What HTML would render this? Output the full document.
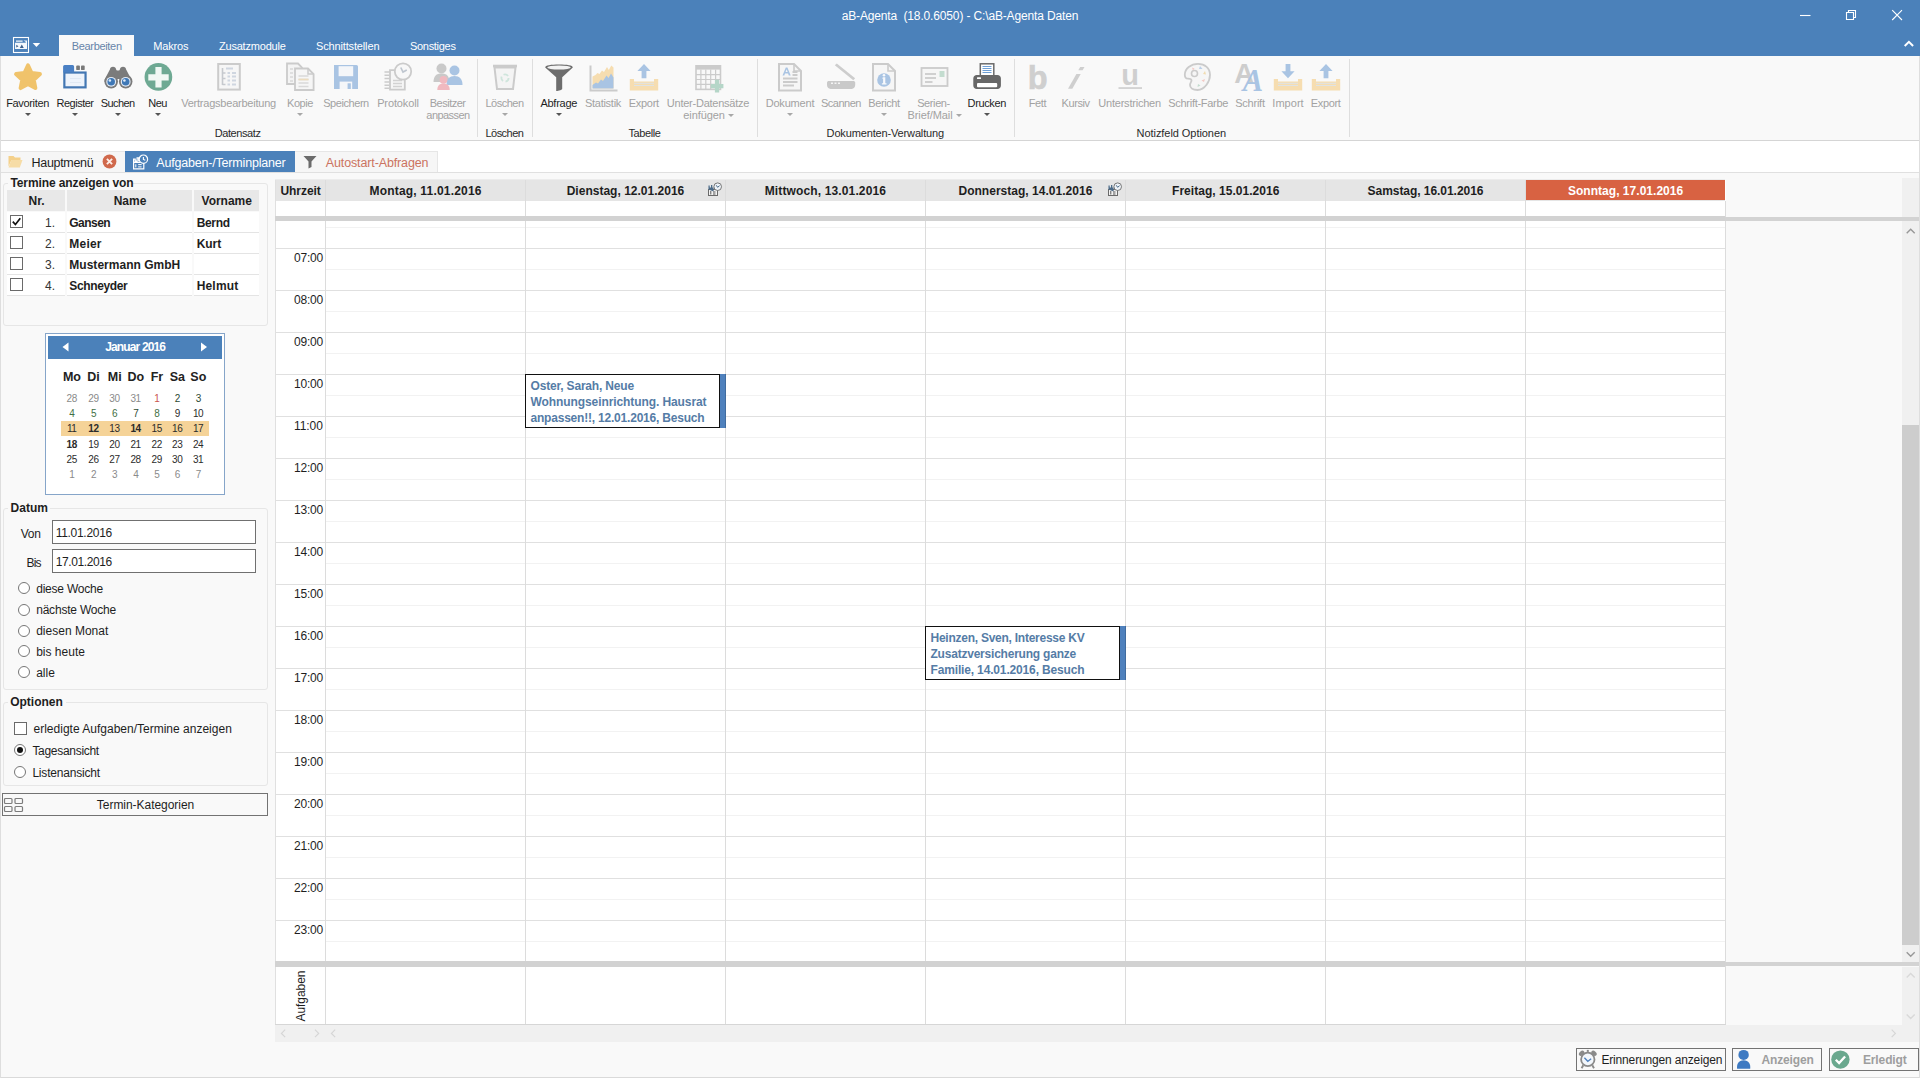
<!DOCTYPE html>
<html><head><meta charset="utf-8"><title>aB-Agenta</title>
<style>
*{box-sizing:border-box;margin:0;padding:0}
html,body{width:1920px;height:1078px;overflow:hidden;background:#f9f9f9;font-family:"Liberation Sans",sans-serif;font-size:12px;color:#1e1e1e}
div,span{position:absolute;white-space:nowrap}
.t{line-height:14px;height:14px}
.c{text-align:center}
.r{text-align:right}
.b{font-weight:bold}
.dis{color:#ababab}
svg{position:absolute;overflow:visible}
</style></head><body>
<div style="left:0;top:0;width:1920px;height:56px;background:#4b81ba"></div>
<div class="t" style="left:841.70px;top:8.80px;font-size:12px;letter-spacing:-0.145px;color:#fff;">aB-Agenta  (18.0.6050) - C:\aB-Agenta Daten</div>
<svg style="left:0;top:0" width="1920" height="56" viewBox="0 0 1920 56"><g stroke="#fff" stroke-width="1.1" fill="none"><path d="M1800 15.5h10.500"/><path d="M1846.500 12.500h7v7h-7z"/><path d="M1848.500 12.500v-2h7v7h-2"/><path d="M1892.200 10.200l9.800 9.800M1902 10.200l-9.800 9.800"/></g><path d="M1904.700 46l4.200-4.200 4.200 4.200" stroke="#fff" stroke-width="2" fill="none"/></svg>
<div style="left:0;top:56px;width:1920px;height:84px;background:#f9f9f9"></div>
<div style="left:0;top:140px;width:1920px;height:1px;background:#d5d5d5"></div>
<div style="left:0;top:141px;width:1920px;height:31px;background:#fff"></div>
<div style="left:59px;top:35px;width:75px;height:21px;background:#f9f9f9"></div>
<div class="t" style="left:71.70px;top:39.00px;font-size:11px;letter-spacing:-0.321px;color:#6785a9;">Bearbeiten</div>
<div class="t" style="left:153.30px;top:39.00px;font-size:11px;letter-spacing:-0.177px;color:#fff;">Makros</div>
<div class="t" style="left:218.95px;top:39.00px;font-size:11px;letter-spacing:-0.199px;color:#fff;">Zusatzmodule</div>
<div class="t" style="left:316.05px;top:39.00px;font-size:11px;letter-spacing:-0.152px;color:#fff;">Schnittstellen</div>
<div class="t" style="left:409.95px;top:39.00px;font-size:11px;letter-spacing:-0.290px;color:#fff;">Sonstiges</div>
<svg style="left:0;top:30px" width="60" height="26" viewBox="0 30 60 26"><rect x="13.500" y="37.500" width="15" height="15" fill="none" stroke="#fff" stroke-width="1.100"/><path d="M15 42.700h10.700v6.300H15zM16 40.500h6.600v1.300H16zM23.500 40.500h3.500v8.500h-1.300v-7.200z" fill="#f4f8fc"/><path d="M16.300 44.800l2.200 1.400-2.200 1.400zM19.800 48l2-3.400 2 3.400z" fill="#3c5f8c"/><path d="M32.700 43h7.500l-3.750 4.100z" fill="#fff"/></svg>
<svg style="left:11.6px;top:61px" width="32" height="32" viewBox="0 0 32 32"><path d="M16.00 4.30 L19.59 11.96 L27.98 13.01 L21.80 18.79 L23.41 27.09 L16.00 23.00 L8.59 27.09 L10.20 18.79 L4.02 13.01 L12.41 11.96Z" fill="#f0c36b" stroke="#f0c36b" stroke-width="3.900" stroke-linejoin="round"/></svg>
<div class="t" style="left:6.15px;top:96.00px;font-size:11px;letter-spacing:-0.328px;color:#1e1e1e;">Favoriten</div>
<svg style="left:24.6px;top:113.0px" width="6" height="3" viewBox="0 0 6 3"><path d="M0 0h6L3 3z" fill="#555"/></svg>
<svg style="left:59.0px;top:61px" width="32" height="32" viewBox="0 0 32 32"><rect x="5.350" y="11.550" width="21.200" height="14.800" fill="#edf3fb" stroke="#4377b3" stroke-width="2.200"/><path d="M4.100 11.500V5.600a1.500 1.500 0 0 1 1.500-1.500h8a1.500 1.500 0 0 1 1.500 1.500V11.500z" fill="#4a80c4"/><rect x="17.200" y="4.500" width="3.700" height="4.600" rx="0.900" fill="#7a7a7a"/><rect x="22" y="4.500" width="3.700" height="4.600" rx="0.900" fill="#7a7a7a"/><path d="M11 17.500h11M11 21.500h11" stroke="#dfe8f3" stroke-width="1.200"/></svg>
<div class="t" style="left:56.45px;top:96.00px;font-size:11px;letter-spacing:-0.483px;color:#1e1e1e;">Register</div>
<svg style="left:72.0px;top:113.0px" width="6" height="3" viewBox="0 0 6 3"><path d="M0 0h6L3 3z" fill="#555"/></svg>
<svg style="left:101.6px;top:61px" width="32" height="32" viewBox="0 0 32 32"><path d="M8 8.200c0-1.500 1.200-2.400 3-2.400s3 0.900 3 2.400l0.800 1.300h2.400l0.800-1.300c0-1.500 1.200-2.400 3-2.400s3 0.900 3 2.400l5.500 10.500v2h-10.500v-4.700h-5v4.700H2.500v-2z" fill="#7b7b7b"/><circle cx="9.200" cy="20.600" r="6.800" fill="#7b7b7b"/><circle cx="23.700" cy="20.600" r="6.800" fill="#7b7b7b"/><rect x="13" y="12" width="7" height="6" fill="#7b7b7b"/><circle cx="9.200" cy="20.800" r="4.900" fill="#e3ecf7"/><circle cx="23.700" cy="20.800" r="4.900" fill="#e3ecf7"/><circle cx="9.200" cy="20.800" r="3.800" fill="#3f78b6"/><circle cx="23.700" cy="20.800" r="3.800" fill="#3f78b6"/><circle cx="7.900" cy="19.500" r="1.300" fill="#dfeaf6"/><circle cx="22.400" cy="19.500" r="1.300" fill="#dfeaf6"/></svg>
<div class="t" style="left:100.80px;top:96.00px;font-size:11px;letter-spacing:-0.618px;color:#1e1e1e;">Suchen</div>
<svg style="left:114.6px;top:113.0px" width="6" height="3" viewBox="0 0 6 3"><path d="M0 0h6L3 3z" fill="#555"/></svg>
<svg style="left:141.6px;top:61px" width="32" height="32" viewBox="0 0 32 32"><circle cx="16.400" cy="15.950" r="13.850" fill="#6ea993"/><path d="M13.400 6.100h6.200v7.100h7.100v6.200h-7.100v7.100h-6.200v-7.100H6.300v-6.200h7.100z" fill="#f1f8f4"/></svg>
<div class="t" style="left:148.32px;top:96.00px;font-size:11px;letter-spacing:-0.538px;color:#1e1e1e;">Neu</div>
<svg style="left:154.6px;top:113.0px" width="6" height="3" viewBox="0 0 6 3"><path d="M0 0h6L3 3z" fill="#555"/></svg>
<svg style="left:212.6px;top:61px" width="32" height="32" viewBox="0 0 32 32"><rect x="5.200" y="3" width="21.600" height="25.600" fill="#f6f6f6" stroke="#cbcbcb" stroke-width="2"/><path d="M9.500 7v17M9.500 12h3M9.500 17.500h3M9.500 23.500h3" stroke="#c6c9ce" stroke-width="1.600" fill="none"/><path d="M13 7.500h7M14.500 12h2.500M19 12h4M14.500 15.500h2.500M19 15.500h4M14.500 19.500h2.500M19 19.500h4M14.500 23.500h2.500M19 23.500h4" stroke="#cfd6e0" stroke-width="1.800"/></svg>
<div class="t" style="left:181.20px;top:96.00px;font-size:11px;letter-spacing:-0.225px;color:#a2a2a2;">Vertragsbearbeitung</div>
<svg style="left:284.0px;top:61px" width="32" height="32" viewBox="0 0 32 32"><path d="M3 2.5h11l4 4V23H3z" fill="#f4f4f4" stroke="#cbcbcb" stroke-width="1.8"/><path d="M6 8h3M6 12h3M6 16h3M6 20h3" stroke="#d8d8d8" stroke-width="1.6"/><path d="M11 7.5h13l5.6 5.6V29H11z" fill="#f6f6f6" stroke="#cbcbcb" stroke-width="1.8"/><path d="M24 7.5v5.6h5.6" fill="none" stroke="#cbcbcb" stroke-width="1.5"/><path d="M14.5 15h10M14.5 18.5h10M14.5 22h10M14.5 25.5h10" stroke="#d9d9d9" stroke-width="1.7"/><path d="M14.5 18.5h10" stroke="#ecdcbf" stroke-width="1.7"/></svg>
<div class="t" style="left:287.10px;top:96.00px;font-size:11px;letter-spacing:-0.467px;color:#a2a2a2;">Kopie</div>
<svg style="left:297.0px;top:113.0px" width="6" height="3" viewBox="0 0 6 3"><path d="M0 0h6L3 3z" fill="#a8a8a8"/></svg>
<svg style="left:330.0px;top:61px" width="32" height="32" viewBox="0 0 32 32"><path d="M4 4h22.5a1.5 1.5 0 0 1 1.5 1.5V28H4z" fill="#a9c4e3"/><rect x="8.6" y="5.2" width="14.6" height="10" fill="#f4f6f9"/><rect x="9.6" y="20.6" width="12.6" height="7.4" fill="#f4f6f9"/><rect x="17.6" y="22.3" width="3.2" height="5.7" fill="#a9c4e3"/></svg>
<div class="t" style="left:323.20px;top:96.00px;font-size:11px;letter-spacing:-0.437px;color:#a2a2a2;">Speichern</div>
<svg style="left:382.0px;top:61px" width="32" height="32" viewBox="0 0 32 32"><path d="M8 9.200h14.800v19.500H8z" fill="#f6f6f6" stroke="#cbcbcb" stroke-width="1.800"/><path d="M2.500 11h5M2.500 14.300h5M2.500 17.600h5M2.500 20.900h5M2.500 24.200h5M2.500 27.300h5" stroke="#cbcbcb" stroke-width="1.500"/><path d="M11 19.500h9M11 22.500h9M11 25.500h9" stroke="#d2d2d2" stroke-width="1.700"/><circle cx="21" cy="10.500" r="8.200" fill="#f8f8f8" stroke="#cbcbcb" stroke-width="1.800"/><path d="M18.800 6.500l2.200 4.500 3.800-2" fill="none" stroke="#bfc6cf" stroke-width="1.700"/></svg>
<div class="t" style="left:377.15px;top:96.00px;font-size:11px;letter-spacing:-0.122px;color:#a2a2a2;">Protokoll</div>
<svg style="left:488.5px;top:61px" width="32" height="32" viewBox="0 0 32 32"><path d="M5.500 6.500h21l-2.500 21.500h-16z" fill="#f4f4f4" stroke="#cbcbcb" stroke-width="2"/><path d="M4 5h24" stroke="#cbcbcb" stroke-width="2.6"/><circle cx="16" cy="17" r="3.600" fill="none" stroke="#cfe5dc" stroke-width="1.800" stroke-dasharray="5 2.500"/></svg>
<div class="t" style="left:485.50px;top:96.00px;font-size:11px;letter-spacing:-0.513px;color:#a2a2a2;">Löschen</div>
<svg style="left:501.5px;top:113.0px" width="6" height="3" viewBox="0 0 6 3"><path d="M0 0h6L3 3z" fill="#a8a8a8"/></svg>
<svg style="left:542.8px;top:61px" width="32" height="32" viewBox="0 0 32 32"><g transform="translate(0,0.7)"><path d="M2.200 5.700C2.200 3.500 8 2.700 16 2.700s13.800 0.800 13.800 3L19.200 15.500v11.500c0 1.200-3.500 2.200-6 2.200V15.500z" fill="#6d6d6d"/><ellipse cx="16" cy="5.800" rx="11.800" ry="2.100" fill="#f2f2f2"/></g></svg>
<div class="t" style="left:540.40px;top:96.00px;font-size:11px;letter-spacing:-0.247px;color:#1e1e1e;">Abfrage</div>
<svg style="left:555.8px;top:113.0px" width="6" height="3" viewBox="0 0 6 3"><path d="M0 0h6L3 3z" fill="#555"/></svg>
<svg style="left:587.0px;top:61px" width="32" height="32" viewBox="0 0 32 32"><path d="M5.500 15.500l3 -1.500 2 -2 2 1 2.500 -3.500 2 1.500 3 -5 1.800 3 2.500 -4.500 2.200 2V27.500H5.500z" fill="#f6ddb0"/><path d="M5.500 24l3.500 -2.500 2 1 3 -4 2 1.500 3.500 -5.500 2 2.500 2.500 -4.500 2.500 4V27.500H5.500z" fill="#a9c4e3"/><path d="M3.500 4.500v25h27" fill="none" stroke="#cbcbcb" stroke-width="2"/></svg>
<div class="t" style="left:584.95px;top:96.00px;font-size:11px;letter-spacing:-0.268px;color:#a2a2a2;">Statistik</div>
<svg style="left:627.8px;top:61px" width="32" height="32" viewBox="0 0 32 32"><path d="M16 3l6.600 7h-4.200v7.300h-4.800V10H9.400z" fill="#a9c4e3"/><path d="M1.800 18h4.200v2.500h20V18h4.200V29.500H1.800z" fill="#f6ddb0"/><path d="M6 22.300h20M6 24.500h20" stroke="#dde3ea" stroke-width="0.900"/></svg>
<div class="t" style="left:628.80px;top:96.00px;font-size:11px;letter-spacing:-0.299px;color:#a2a2a2;">Export</div>
<svg style="left:774.0px;top:61px" width="32" height="32" viewBox="0 0 32 32"><path d="M5 3h15l7 7v19.500H5z" fill="#f6f6f6" stroke="#cbcbcb" stroke-width="2"/><path d="M20 3v7h7" fill="none" stroke="#cbcbcb" stroke-width="1.600"/><path d="M8.500 14.500l3.300-8h1.600l3.300 8h-1.900l-0.700-1.900h-3.100l-0.700 1.900zM11.600 11.100h2.100l-1.050-2.900z" fill="#a9c4e3"/><path d="M18.500 11h5M18.500 14h5M9 17.500h14.500M9 21h14.500M9 24.500h11" stroke="#cbcbcb" stroke-width="1.900"/></svg>
<div class="t" style="left:765.65px;top:96.00px;font-size:11px;letter-spacing:-0.179px;color:#a2a2a2;">Dokument</div>
<svg style="left:787.0px;top:113.0px" width="6" height="3" viewBox="0 0 6 3"><path d="M0 0h6L3 3z" fill="#a8a8a8"/></svg>
<svg style="left:825.0px;top:61px" width="32" height="32" viewBox="0 0 32 32"><path d="M9.800 4.300l2-1.700 18.300 14.600-1.800 2z" fill="#cdcdcd"/><path d="M2 21.500c0-0.800 0.800-1.500 2-1.500h24.200c1.200 0 2 0.700 2 1.500v2.500c0 2.200-1.500 3.900-3.500 3.900h-21.200c-2 0-3.500-1.700-3.500-3.900z" fill="#c9c9c9"/><path d="M6 22.300h2M9.500 22.300h2M13 22.300h2" stroke="#f4f4f4" stroke-width="1.500"/></svg>
<div class="t" style="left:821.02px;top:96.00px;font-size:11px;letter-spacing:-0.496px;color:#a2a2a2;">Scannen</div>
<svg style="left:868.0px;top:61px" width="32" height="32" viewBox="0 0 32 32"><path d="M5 3h15l7 7v19.500H5z" fill="#f6f6f6" stroke="#cbcbcb" stroke-width="2"/><path d="M20 3v7h7" fill="none" stroke="#cbcbcb" stroke-width="1.600"/><circle cx="16" cy="19" r="6.800" fill="#a9c4e3"/><path d="M15 16.200h2.300v6h1.200v1.400h-4.600v-1.400h1.200v-4.600h-1.200z" fill="#f7f9fc"/><circle cx="16" cy="14.200" r="1.300" fill="#f7f9fc"/></svg>
<div class="t" style="left:868.25px;top:96.00px;font-size:11px;letter-spacing:-0.391px;color:#a2a2a2;">Bericht</div>
<svg style="left:881.0px;top:113.0px" width="6" height="3" viewBox="0 0 6 3"><path d="M0 0h6L3 3z" fill="#a8a8a8"/></svg>
<svg style="left:970.8px;top:61px" width="32" height="32" viewBox="0 0 32 32"><rect x="9.300" y="2.800" width="13.500" height="12" fill="#fff" stroke="#6a6a6a" stroke-width="1.500"/><path d="M11.500 5.500h9M11.500 7.500h9M11.500 9.500h9M11.500 11.500h9" stroke="#6fa0d6" stroke-width="1"/><path d="M2.300 17.500c0-2 1.500-3.500 3.500-3.500h20.600c2 0 3.500 1.500 3.500 3.500v7c0 2-1.500 3.500-3.500 3.500h-20.600c-2 0-3.500-1.500-3.500-3.500z" fill="#676767"/><rect x="6" y="22" width="20.200" height="4.200" rx="1" fill="#fff"/><rect x="6" y="16.200" width="4" height="1.800" rx="0.500" fill="#fff"/></svg>
<div class="t" style="left:967.55px;top:96.00px;font-size:11px;letter-spacing:-0.351px;color:#1e1e1e;">Drucken</div>
<svg style="left:983.8px;top:113.0px" width="6" height="3" viewBox="0 0 6 3"><path d="M0 0h6L3 3z" fill="#555"/></svg>
<svg style="left:1181.4px;top:61px" width="32" height="32" viewBox="0 0 32 32"><path d="M17 2.800c7 0 12 4.500 12 11s-5 15.200-12.500 15.200c-5 0-7.500-2.500-7.500-5 0-2 1.500-3 1.500-4.500s-1.500-1.800-3.500-1.800c-2.500 0-3.200-2-3.200-4 0-6 6-10.900 13.200-10.900z" fill="#f6f6f6" stroke="#cbcbcb" stroke-width="1.800"/><circle cx="13.500" cy="12.500" r="3" fill="none" stroke="#cbcbcb" stroke-width="1.600"/><path d="M11 6.500l2.500 1-1.500 2z" fill="#f3c9c4"/><path d="M19 5l2.500 3h-3.500z" fill="#bcd0e8"/><path d="M24 10l1 3.500-3-0.500z" fill="#f1dcb0"/><path d="M24 18l-1 3-2.500-1.500z" fill="#f3c9c4"/><path d="M17 23l2.500 1.500-3 1.500z" fill="#c3dccf"/></svg>
<div class="t" style="left:1168.25px;top:96.00px;font-size:11px;letter-spacing:-0.283px;color:#a2a2a2;">Schrift-Farbe</div>
<svg style="left:1272.0px;top:61px" width="32" height="32" viewBox="0 0 32 32"><path d="M16 17.300l6.600 -7h-4.200V3h-4.800v7.300H9.400z" fill="#a9c4e3"/><path d="M1.800 18h4.200v2.500h20V18h4.200V29.500H1.800z" fill="#f6ddb0"/><path d="M6 22.300h20M6 24.500h20" stroke="#dde3ea" stroke-width="0.900"/></svg>
<div class="t" style="left:1272.35px;top:96.00px;font-size:11px;letter-spacing:0.021px;color:#a2a2a2;">Import</div>
<svg style="left:1309.7px;top:61px" width="32" height="32" viewBox="0 0 32 32"><path d="M16 3l6.600 7h-4.200v7.300h-4.800V10H9.400z" fill="#a9c4e3"/><path d="M1.800 18h4.200v2.500h20V18h4.200V29.500H1.800z" fill="#f6ddb0"/><path d="M6 22.300h20M6 24.500h20" stroke="#dde3ea" stroke-width="0.900"/></svg>
<div class="t" style="left:1310.83px;top:96.00px;font-size:11px;letter-spacing:-0.340px;color:#a2a2a2;">Export</div>
<svg style="left:432.0px;top:61px" width="32" height="32" viewBox="0 0 32 32"><circle cx="9.5" cy="7.5" r="5" fill="#c9c9c9"/><path d="M1.5 21c0-6 3-8.5 8-8.5s8 2.500 8 8.500z" fill="#c9c9c9"/><circle cx="22.5" cy="9.5" r="5" fill="#a9c4e3"/><path d="M14.5 24c0-6 3-9 8-9s8 3 8 9z" fill="#a9c4e3"/><circle cx="11.5" cy="18.8" r="3.9" fill="#f0b9c0"/><path d="M5.3 29c0-4.500 2.500-6.500 6.200-6.500s6.200 2 6.200 6.500z" fill="#f0b9c0"/></svg>
<div class="t" style="left:429.80px;top:96.00px;font-size:11px;letter-spacing:-0.517px;color:#a2a2a2;">Besitzer</div>
<div class="t" style="left:426.35px;top:108.00px;font-size:11px;letter-spacing:-0.551px;color:#a2a2a2;">anpassen</div>
<svg style="left:693.0px;top:61px" width="32" height="32" viewBox="0 0 32 32"><rect x="3" y="4.800" width="24.500" height="23.600" fill="#f8f8f8" stroke="#cbcbcb" stroke-width="1.600"/><rect x="3" y="4.200" width="24.500" height="4.400" fill="#cbcbcb"/><path d="M7.900 8.600v19.800M12.800 8.600v19.800M17.700 8.600v19.800M22.600 8.600v19.800M3 13.550h24.500M3 18.500h24.500M3 23.450h24.500" stroke="#cbcbcb" stroke-width="1.200"/><path d="M21.900 18.800h4.300v4.200h4.200v4.300h-4.200v4.200h-4.300v-4.200h-4.200v-4.300h4.200z" fill="#b5d6c8"/></svg>
<div class="t" style="left:666.85px;top:96.00px;font-size:11px;letter-spacing:-0.244px;color:#a2a2a2;">Unter-Datensätze</div>
<div class="t" style="left:683.35px;top:108.00px;font-size:11px;letter-spacing:-0.113px;color:#a2a2a2;">einfügen</div>
<svg style="left:727.6px;top:113.5px" width="6" height="3" viewBox="0 0 6 3"><path d="M0 0h6L3 3z" fill="#a8a8a8"/></svg>
<svg style="left:916.8px;top:61px" width="32" height="32" viewBox="0 0 32 32"><rect x="4.500" y="7" width="26" height="18" fill="#f6f6f6" stroke="#cbcbcb" stroke-width="1.800"/><path d="M8 13h11M8 17h11M8 21h7.500" stroke="#d0d0d0" stroke-width="1.800"/><rect x="22.500" y="10" width="5" height="6" fill="#c3dccf"/></svg>
<div class="t" style="left:917.19px;top:96.00px;font-size:11px;letter-spacing:-0.405px;color:#a2a2a2;">Serien-</div>
<div class="t" style="left:907.50px;top:108.00px;font-size:11px;letter-spacing:-0.084px;color:#a2a2a2;">Brief/Mail</div>
<svg style="left:955.8px;top:113.5px" width="6" height="3" viewBox="0 0 6 3"><path d="M0 0h6L3 3z" fill="#a8a8a8"/></svg>
<svg style="left:1020px;top:56px" width="260" height="40" viewBox="1020 56 260 40"><text x="1037.6" y="88.8" text-anchor="middle" font-family="Liberation Sans" font-weight="bold" font-size="32.500" fill="#cfcfcf" stroke="#cfcfcf" stroke-width="0.600">b</text><path d="M1068 88.8h4.300l8.400-14.800h-4.300z" fill="#cfcfcf"/><path d="M1078.300 70.300l1.900-3.400h4.300l-1.900 3.400z" fill="#cfcfcf"/><text x="1130.200" y="85" text-anchor="middle" font-family="Liberation Sans" font-weight="bold" font-size="29" fill="#cfcfcf">u</text><rect x="1118.500" y="87.200" width="23.500" height="1.700" fill="#cfcfcf"/><text x="1244.300" y="82.800" text-anchor="middle" font-family="Liberation Sans" font-weight="bold" font-size="27.500" fill="#cdcdcd">A</text><text x="1253" y="90.700" text-anchor="middle" font-family="Liberation Serif" font-style="italic" font-weight="bold" font-size="30.500" fill="#a9c4e3">A</text></svg>
<div class="t" style="left:1028.68px;top:96.00px;font-size:11px;letter-spacing:-0.379px;color:#a2a2a2;">Fett</div>
<div class="t" style="left:1061.54px;top:96.00px;font-size:11px;letter-spacing:-0.407px;color:#a2a2a2;">Kursiv</div>
<div class="t" style="left:1098.35px;top:96.00px;font-size:11px;letter-spacing:-0.224px;color:#a2a2a2;">Unterstrichen</div>
<div class="t" style="left:1235.20px;top:96.00px;font-size:11px;letter-spacing:-0.225px;color:#a2a2a2;">Schrift</div>
<div style="left:477px;top:59px;width:1px;height:78px;background:#dedede;"></div>
<div style="left:532px;top:59px;width:1px;height:78px;background:#dedede;"></div>
<div style="left:757px;top:59px;width:1px;height:78px;background:#dedede;"></div>
<div style="left:1014px;top:59px;width:1px;height:78px;background:#dedede;"></div>
<div style="left:1349px;top:59px;width:1px;height:78px;background:#dedede;"></div>
<div class="t" style="left:214.70px;top:126.00px;font-size:11px;letter-spacing:-0.414px;color:#2a2a2a;">Datensatz</div>
<div class="t" style="left:485.50px;top:126.00px;font-size:11px;letter-spacing:-0.541px;color:#2a2a2a;">Löschen</div>
<div class="t" style="left:628.55px;top:126.00px;font-size:11px;letter-spacing:-0.423px;color:#2a2a2a;">Tabelle</div>
<div class="t" style="left:826.60px;top:126.00px;font-size:11px;letter-spacing:-0.146px;color:#2a2a2a;">Dokumenten-Verwaltung</div>
<div class="t" style="left:1136.60px;top:126.00px;font-size:11px;letter-spacing:-0.061px;color:#2a2a2a;">Notizfeld Optionen</div>
<div style="left:0px;top:151px;width:125px;height:21px;background:#f6f6f6;border-top:1px solid #e6e6e6;"></div>
<div style="left:125px;top:151px;width:170px;height:21px;background:#4b81ba;"></div>
<div style="left:295px;top:151px;width:143px;height:21px;background:#f6f6f6;border-top:1px solid #e6e6e6;border-right:1px solid #e6e6e6;"></div>
<div class="t" style="left:31.60px;top:156.00px;font-size:12.5px;letter-spacing:-0.325px;">Hauptmenü</div>
<div class="t" style="left:156.30px;top:156.00px;font-size:12.5px;letter-spacing:-0.191px;color:#fff;">Aufgaben-/Terminplaner</div>
<div class="t" style="left:325.80px;top:156.00px;font-size:12.5px;letter-spacing:-0.129px;color:#cb7360;">Autostart-Abfragen</div>
<svg style="left:8px;top:155px" width="15" height="13" viewBox="0 0 15 13"><path d="M0.500 1h5l1.500 1.500h5.500V5H3.500L0.500 11.500z" fill="#f4d08a"/><path d="M3.300 5h11.200L11.800 12.500H0.500z" fill="#f6dca6"/></svg>
<svg style="left:102.400px;top:154.300px" width="15" height="15" viewBox="0 0 15 15"><circle cx="7.500" cy="7.500" r="6.900" fill="#d0694c"/><path d="M4.900 4.900l5.200 5.200M10.100 4.900l-5.200 5.200" stroke="#fdeee8" stroke-width="1.900"/></svg>
<svg style="left:133px;top:154px" width="16" height="16" viewBox="0 0 16 16" fill="none" stroke="#fff" stroke-width="1.200"><path d="M0.600 8.400h10.200v6.400H0.600zM0.600 8.400V5.200h1.600v2h1.900V3.800h1.600v3.400"/><path d="M2.800 10.300v3M5.200 10.600h3.400M5.200 12.900h3.400" stroke-width="1"/><circle cx="10.400" cy="5.200" r="4.200" fill="#4b81ba"/><path d="M10.400 3v2.400l1.900 0.900" stroke-width="1.100"/></svg>
<svg style="left:303px;top:155px" width="14" height="14" viewBox="0 0 14 14"><path d="M0.5 1h13L8.5 6.5V12l-3 1.5V6.5z" fill="#6b6b6b"/></svg>
<div style="left:3px;top:183px;width:265px;height:143px;border:1px solid #e6e6e6;border-radius:3px;"></div>
<div style="left:8px;top:176px;width:124px;height:14px;background:#f9f9f9;"></div>
<div class="t" style="left:10.40px;top:176.00px;font-size:12px;letter-spacing:-0.097px;font-weight:bold;">Termine anzeigen von</div>
<div style="left:7px;top:190px;width:58px;height:21px;background:#e8e8e8;"></div>
<div style="left:67px;top:190px;width:125px;height:21px;background:#e8e8e8;"></div>
<div style="left:194px;top:190px;width:65px;height:21px;background:#e8e8e8;"></div>
<div class="t" style="left:28.50px;top:193.50px;font-size:12px;font-weight:bold;">Nr.</div>
<div class="t" style="left:113.66px;top:193.50px;font-size:12px;font-weight:bold;">Name</div>
<div class="t" style="left:201.55px;top:193.50px;font-size:12px;letter-spacing:-0.023px;font-weight:bold;">Vorname</div>
<div style="left:7px;top:212px;width:58px;height:20px;background:#fff;"></div>
<div style="left:67px;top:212px;width:125px;height:20px;background:#fff;"></div>
<div style="left:194px;top:212px;width:65px;height:20px;background:#fff;"></div>
<div style="left:7px;top:232px;width:58px;height:1px;background:#e4e4e4;"></div>
<div style="left:67px;top:232px;width:125px;height:1px;background:#e4e4e4;"></div>
<div style="left:194px;top:232px;width:65px;height:1px;background:#e4e4e4;"></div>
<div style="left:10px;top:215px;width:13px;height:13px;background:#fff;border:1px solid #6a6a6a;"></div>
<svg style="left:10px;top:215px" width="13" height="13" viewBox="0 0 13 13"><path d="M2.800 6.600l2.600 2.900L10.300 3.200" fill="none" stroke="#111" stroke-width="1.700"/></svg>
<div class="t" style="left:44.99px;top:215.70px;font-size:12px;color:#333;">1.</div>
<div class="t" style="left:69.30px;top:215.70px;font-size:12px;letter-spacing:-0.536px;font-weight:bold;">Gansen</div>
<div class="t" style="left:196.70px;top:215.70px;font-size:12px;letter-spacing:-0.334px;font-weight:bold;">Bernd</div>
<div style="left:7px;top:233px;width:58px;height:20px;background:#fff;"></div>
<div style="left:67px;top:233px;width:125px;height:20px;background:#fff;"></div>
<div style="left:194px;top:233px;width:65px;height:20px;background:#fff;"></div>
<div style="left:7px;top:253px;width:58px;height:1px;background:#e4e4e4;"></div>
<div style="left:67px;top:253px;width:125px;height:1px;background:#e4e4e4;"></div>
<div style="left:194px;top:253px;width:65px;height:1px;background:#e4e4e4;"></div>
<div style="left:10px;top:236px;width:13px;height:13px;background:#fff;border:1px solid #6a6a6a;"></div>
<div class="t" style="left:44.99px;top:236.70px;font-size:12px;color:#333;">2.</div>
<div class="t" style="left:69.30px;top:236.70px;font-size:12px;letter-spacing:0.210px;font-weight:bold;">Meier</div>
<div class="t" style="left:196.70px;top:236.70px;font-size:12px;letter-spacing:-0.041px;font-weight:bold;">Kurt</div>
<div style="left:7px;top:254px;width:58px;height:20px;background:#fff;"></div>
<div style="left:67px;top:254px;width:125px;height:20px;background:#fff;"></div>
<div style="left:194px;top:254px;width:65px;height:20px;background:#fff;"></div>
<div style="left:7px;top:274px;width:58px;height:1px;background:#e4e4e4;"></div>
<div style="left:67px;top:274px;width:125px;height:1px;background:#e4e4e4;"></div>
<div style="left:194px;top:274px;width:65px;height:1px;background:#e4e4e4;"></div>
<div style="left:10px;top:257px;width:13px;height:13px;background:#fff;border:1px solid #6a6a6a;"></div>
<div class="t" style="left:44.99px;top:257.70px;font-size:12px;color:#333;">3.</div>
<div class="t" style="left:69.30px;top:257.70px;font-size:12px;letter-spacing:0.021px;font-weight:bold;">Mustermann GmbH</div>
<div style="left:7px;top:275px;width:58px;height:20px;background:#fff;"></div>
<div style="left:67px;top:275px;width:125px;height:20px;background:#fff;"></div>
<div style="left:194px;top:275px;width:65px;height:20px;background:#fff;"></div>
<div style="left:7px;top:295px;width:58px;height:1px;background:#e4e4e4;"></div>
<div style="left:67px;top:295px;width:125px;height:1px;background:#e4e4e4;"></div>
<div style="left:194px;top:295px;width:65px;height:1px;background:#e4e4e4;"></div>
<div style="left:10px;top:278px;width:13px;height:13px;background:#fff;border:1px solid #6a6a6a;"></div>
<div class="t" style="left:44.99px;top:278.70px;font-size:12px;color:#333;">4.</div>
<div class="t" style="left:69.30px;top:278.70px;font-size:12px;letter-spacing:-0.373px;font-weight:bold;">Schneyder</div>
<div class="t" style="left:196.70px;top:278.70px;font-size:12px;letter-spacing:0.172px;font-weight:bold;">Helmut</div>
<div style="left:45px;top:333px;width:180px;height:162px;background:#fff;border:1px solid #86a5c9;"></div>
<div style="left:48px;top:336px;width:174px;height:23px;background:#4b81ba;"></div>
<div class="t" style="left:105.20px;top:340.00px;font-size:12px;letter-spacing:-0.853px;font-weight:bold;color:#fff;">Januar 2016</div>
<svg style="left:60px;top:341px" width="150" height="12" viewBox="0 0 150 12"><path d="M8.5 1.5v9L2.5 6z" fill="#fff"/><path d="M141 1.5v9l6-4.5z" fill="#fff"/></svg>
<div class="t" style="left:62.88px;top:370.00px;font-size:12.5px;font-weight:bold;color:#222;">Mo</div>
<div class="t" style="left:87.35px;top:370.00px;font-size:12.5px;font-weight:bold;color:#222;">Di</div>
<div class="t" style="left:107.76px;top:370.00px;font-size:12.5px;font-weight:bold;color:#222;">Mi</div>
<div class="t" style="left:127.47px;top:370.00px;font-size:12.5px;font-weight:bold;color:#222;">Do</div>
<div class="t" style="left:150.65px;top:370.00px;font-size:12.5px;font-weight:bold;color:#222;">Fr</div>
<div class="t" style="left:169.76px;top:370.00px;font-size:12.5px;font-weight:bold;color:#222;">Sa</div>
<div class="t" style="left:190.31px;top:370.00px;font-size:12.5px;font-weight:bold;color:#222;">So</div>
<div style="left:61px;top:421px;width:148px;height:15px;background:#f5d398;"></div>
<div class="t" style="left:66.54px;top:392.00px;font-size:10px;color:#8a8a8a;letter-spacing:-0.4px;">28</div>
<div class="t" style="left:88.24px;top:392.00px;font-size:10px;color:#8a8a8a;letter-spacing:-0.4px;">29</div>
<div class="t" style="left:109.34px;top:392.00px;font-size:10px;color:#8a8a8a;letter-spacing:-0.4px;">30</div>
<div class="t" style="left:130.44px;top:392.00px;font-size:10px;color:#8a8a8a;letter-spacing:-0.4px;">31</div>
<div class="t" style="left:154.32px;top:392.00px;font-size:10px;color:#c9544f;letter-spacing:-0.4px;">1</div>
<div class="t" style="left:174.82px;top:392.00px;font-size:10px;color:#2d4a33;letter-spacing:-0.4px;">2</div>
<div class="t" style="left:195.72px;top:392.00px;font-size:10px;color:#2d4a33;letter-spacing:-0.4px;">3</div>
<div class="t" style="left:69.32px;top:407.00px;font-size:10px;color:#3f7044;letter-spacing:-0.4px;">4</div>
<div class="t" style="left:91.02px;top:407.00px;font-size:10px;color:#3f7044;letter-spacing:-0.4px;">5</div>
<div class="t" style="left:112.12px;top:407.00px;font-size:10px;color:#3f7044;letter-spacing:-0.4px;">6</div>
<div class="t" style="left:133.22px;top:407.00px;font-size:10px;color:#2d4a33;letter-spacing:-0.4px;">7</div>
<div class="t" style="left:154.32px;top:407.00px;font-size:10px;color:#3f7044;letter-spacing:-0.4px;">8</div>
<div class="t" style="left:174.82px;top:407.00px;font-size:10px;color:#2b2b2b;letter-spacing:-0.4px;">9</div>
<div class="t" style="left:192.94px;top:407.00px;font-size:10px;color:#2b2b2b;letter-spacing:-0.4px;">10</div>
<div class="t" style="left:66.91px;top:422.00px;font-size:10px;color:#2b2b2b;letter-spacing:-0.4px;">11</div>
<div class="t" style="left:88.24px;top:422.00px;font-size:10px;font-weight:bold;color:#2b2b2b;letter-spacing:-0.4px;">12</div>
<div class="t" style="left:109.34px;top:422.00px;font-size:10px;color:#2b2b2b;letter-spacing:-0.4px;">13</div>
<div class="t" style="left:130.44px;top:422.00px;font-size:10px;font-weight:bold;color:#2b2b2b;letter-spacing:-0.4px;">14</div>
<div class="t" style="left:151.54px;top:422.00px;font-size:10px;color:#2b2b2b;letter-spacing:-0.4px;">15</div>
<div class="t" style="left:172.04px;top:422.00px;font-size:10px;color:#2b2b2b;letter-spacing:-0.4px;">16</div>
<div class="t" style="left:192.94px;top:422.00px;font-size:10px;color:#2b2b2b;letter-spacing:-0.4px;">17</div>
<div class="t" style="left:66.54px;top:438.00px;font-size:10px;font-weight:bold;color:#2b2b2b;letter-spacing:-0.4px;">18</div>
<div class="t" style="left:88.24px;top:438.00px;font-size:10px;color:#2b2b2b;letter-spacing:-0.4px;">19</div>
<div class="t" style="left:109.34px;top:438.00px;font-size:10px;color:#2b2b2b;letter-spacing:-0.4px;">20</div>
<div class="t" style="left:130.44px;top:438.00px;font-size:10px;color:#2b2b2b;letter-spacing:-0.4px;">21</div>
<div class="t" style="left:151.54px;top:438.00px;font-size:10px;color:#2b2b2b;letter-spacing:-0.4px;">22</div>
<div class="t" style="left:172.04px;top:438.00px;font-size:10px;color:#2b2b2b;letter-spacing:-0.4px;">23</div>
<div class="t" style="left:192.94px;top:438.00px;font-size:10px;color:#2b2b2b;letter-spacing:-0.4px;">24</div>
<div class="t" style="left:66.54px;top:453.20px;font-size:10px;color:#2b2b2b;letter-spacing:-0.4px;">25</div>
<div class="t" style="left:88.24px;top:453.20px;font-size:10px;color:#2b2b2b;letter-spacing:-0.4px;">26</div>
<div class="t" style="left:109.34px;top:453.20px;font-size:10px;color:#2b2b2b;letter-spacing:-0.4px;">27</div>
<div class="t" style="left:130.44px;top:453.20px;font-size:10px;color:#2b2b2b;letter-spacing:-0.4px;">28</div>
<div class="t" style="left:151.54px;top:453.20px;font-size:10px;color:#2b2b2b;letter-spacing:-0.4px;">29</div>
<div class="t" style="left:172.04px;top:453.20px;font-size:10px;color:#2b2b2b;letter-spacing:-0.4px;">30</div>
<div class="t" style="left:192.94px;top:453.20px;font-size:10px;color:#2b2b2b;letter-spacing:-0.4px;">31</div>
<div class="t" style="left:69.32px;top:468.00px;font-size:10px;color:#8a8a8a;letter-spacing:-0.4px;">1</div>
<div class="t" style="left:91.02px;top:468.00px;font-size:10px;color:#8a8a8a;letter-spacing:-0.4px;">2</div>
<div class="t" style="left:112.12px;top:468.00px;font-size:10px;color:#8a8a8a;letter-spacing:-0.4px;">3</div>
<div class="t" style="left:133.22px;top:468.00px;font-size:10px;color:#8a8a8a;letter-spacing:-0.4px;">4</div>
<div class="t" style="left:154.32px;top:468.00px;font-size:10px;color:#8a8a8a;letter-spacing:-0.4px;">5</div>
<div class="t" style="left:174.82px;top:468.00px;font-size:10px;color:#8a8a8a;letter-spacing:-0.4px;">6</div>
<div class="t" style="left:195.72px;top:468.00px;font-size:10px;color:#8a8a8a;letter-spacing:-0.4px;">7</div>
<div style="left:3px;top:508px;width:265px;height:182px;border:1px solid #e6e6e6;border-radius:3px;"></div>
<div style="left:8px;top:501px;width:42px;height:14px;background:#f9f9f9;"></div>
<div class="t" style="left:10.60px;top:501.00px;font-size:12px;font-weight:bold;">Datum</div>
<div style="left:52px;top:520px;width:204px;height:24px;background:#fff;border:1px solid #707070;"></div>
<div style="left:52px;top:549px;width:204px;height:24px;background:#fff;border:1px solid #707070;"></div>
<div class="t" style="left:20.80px;top:527.00px;font-size:12px;letter-spacing:-0.330px;">Von</div>
<div class="t" style="left:26.60px;top:555.70px;font-size:12px;letter-spacing:-0.923px;">Bis</div>
<div class="t" style="left:55.70px;top:525.70px;font-size:12px;letter-spacing:-0.297px;">11.01.2016</div>
<div class="t" style="left:55.70px;top:554.70px;font-size:12px;letter-spacing:-0.386px;">17.01.2016</div>
<div style="left:18px;top:582.3px;width:12px;height:12px;background:#fff;border:1px solid #767676;border-radius:6px;"></div>
<div class="t" style="left:36.20px;top:581.80px;font-size:12px;letter-spacing:-0.214px;">diese Woche</div>
<div style="left:18px;top:603.5px;width:12px;height:12px;background:#fff;border:1px solid #767676;border-radius:6px;"></div>
<div class="t" style="left:36.20px;top:603.00px;font-size:12px;letter-spacing:-0.207px;">nächste Woche</div>
<div style="left:18px;top:624.5px;width:12px;height:12px;background:#fff;border:1px solid #767676;border-radius:6px;"></div>
<div class="t" style="left:36.20px;top:624.00px;font-size:12px;">diesen Monat</div>
<div style="left:18px;top:645.4px;width:12px;height:12px;background:#fff;border:1px solid #767676;border-radius:6px;"></div>
<div class="t" style="left:36.20px;top:644.90px;font-size:12px;">bis heute</div>
<div style="left:18px;top:666.2px;width:12px;height:12px;background:#fff;border:1px solid #767676;border-radius:6px;"></div>
<div class="t" style="left:36.20px;top:665.70px;font-size:12px;">alle</div>
<div style="left:3px;top:702px;width:265px;height:84px;border:1px solid #e6e6e6;border-radius:3px;"></div>
<div style="left:8px;top:695px;width:58px;height:14px;background:#f9f9f9;"></div>
<div class="t" style="left:10.20px;top:695.00px;font-size:12px;font-weight:bold;">Optionen</div>
<div style="left:14px;top:722px;width:13px;height:13px;background:#fff;border:1px solid #6a6a6a;"></div>
<div class="t" style="left:33.50px;top:722.00px;font-size:12px;letter-spacing:0.005px;">erledigte Aufgaben/Termine anzeigen</div>
<div style="left:14px;top:744px;width:12px;height:12px;background:#fff;border:1px solid #767676;border-radius:6px;"></div>
<div style="left:17px;top:747px;width:6px;height:6px;background:#111;border-radius:3px;"></div>
<div class="t" style="left:32.40px;top:743.50px;font-size:12px;letter-spacing:-0.295px;">Tagesansicht</div>
<div style="left:14px;top:766px;width:12px;height:12px;background:#fff;border:1px solid #767676;border-radius:6px;"></div>
<div class="t" style="left:32.40px;top:765.50px;font-size:12px;letter-spacing:-0.194px;">Listenansicht</div>
<div style="left:2px;top:793px;width:266px;height:23px;background:#f9f9f9;border:1px solid #737373;"></div>
<div class="t" style="left:96.85px;top:798.00px;font-size:12px;letter-spacing:-0.044px;">Termin-Kategorien</div>
<svg style="left:4px;top:798px" width="20" height="15" viewBox="0 0 20 15" fill="none" stroke="#7c7c7c" stroke-width="1.2"><rect x="0.5" y="0.5" width="7.5" height="5" rx="1"/><rect x="11" y="0.5" width="7.5" height="5" rx="1"/><rect x="0.5" y="8.5" width="7.5" height="5" rx="1"/><rect x="11" y="8.5" width="7.5" height="5" rx="1"/></svg>
<div style="left:0;top:172px;width:1920px;height:1px;background:#e0e0e0"></div>
<div style="left:275px;top:180px;width:1451px;height:845px;background:#fff"></div>
<div style="left:275px;top:179px;width:1450px;height:22px;background:#e5e5e5;border-top:1px solid #ececec"></div>
<div style="left:1526px;top:180px;width:199px;height:20px;background:#d86242"></div>
<div class="t" style="left:280.50px;top:183.60px;font-size:12px;letter-spacing:-0.067px;font-weight:bold;">Uhrzeit</div>
<div class="t" style="left:369.45px;top:183.60px;font-size:12px;letter-spacing:0.199px;font-weight:bold;color:#1e1e1e;">Montag, 11.01.2016</div>
<div class="t" style="left:566.70px;top:183.60px;font-size:12px;letter-spacing:0.010px;font-weight:bold;color:#1e1e1e;">Dienstag, 12.01.2016</div>
<div class="t" style="left:764.70px;top:183.60px;font-size:12px;letter-spacing:0.134px;font-weight:bold;color:#1e1e1e;">Mittwoch, 13.01.2016</div>
<div class="t" style="left:958.45px;top:183.60px;font-size:12px;letter-spacing:0.023px;font-weight:bold;color:#1e1e1e;">Donnerstag, 14.01.2016</div>
<div class="t" style="left:1172.05px;top:183.60px;font-size:12px;letter-spacing:0.030px;font-weight:bold;color:#1e1e1e;">Freitag, 15.01.2016</div>
<div class="t" style="left:1367.60px;top:183.60px;font-size:12px;letter-spacing:-0.050px;font-weight:bold;color:#1e1e1e;">Samstag, 16.01.2016</div>
<div class="t" style="left:1567.95px;top:183.60px;font-size:12px;letter-spacing:0.030px;font-weight:bold;color:#fff;">Sonntag, 17.01.2016</div>
<svg style="left:708px;top:182px" width="16" height="16" viewBox="0 0 16 16"><rect x="0.5" y="7.500" width="9" height="6" fill="#f2f2f2" stroke="#6a6a6a"/><path d="M0.500 7.500v-4h1.200v2h1.300v-2.500h1.300v2.500h1.300v4z" fill="#4b6a88"/><path d="M2.800 9v3.500M5 10h2.500M5 12h2.500" stroke="#555" stroke-width="1"/><circle cx="9.700" cy="4.700" r="3.800" fill="#eef3f8" stroke="#6a6a6a" stroke-width="0.900"/><path d="M8.300 3.300l1.300 2 2-1.600" fill="none" stroke="#4b6a88" stroke-width="1"/></svg>
<svg style="left:1108px;top:182px" width="16" height="16" viewBox="0 0 16 16"><rect x="0.5" y="7.500" width="9" height="6" fill="#f2f2f2" stroke="#6a6a6a"/><path d="M0.500 7.500v-4h1.200v2h1.300v-2.500h1.300v2.500h1.300v4z" fill="#4b6a88"/><path d="M2.800 9v3.500M5 10h2.500M5 12h2.500" stroke="#555" stroke-width="1"/><circle cx="9.700" cy="4.700" r="3.800" fill="#eef3f8" stroke="#6a6a6a" stroke-width="0.900"/><path d="M8.300 3.300l1.300 2 2-1.600" fill="none" stroke="#4b6a88" stroke-width="1"/></svg>
<div style="left:326px;top:227px;width:1399px;height:1px;background:#f2f2f2"></div>
<div style="left:275px;top:248px;width:1450px;height:1px;background:#e0e0e0"></div>
<div style="left:326px;top:269px;width:1399px;height:1px;background:#f2f2f2"></div>
<div class="t" style="left:294.10px;top:251.00px;font-size:12px;letter-spacing:-0.266px;">07:00</div>
<div style="left:275px;top:290px;width:1450px;height:1px;background:#e0e0e0"></div>
<div style="left:326px;top:311px;width:1399px;height:1px;background:#f2f2f2"></div>
<div class="t" style="left:294.10px;top:293.00px;font-size:12px;letter-spacing:-0.266px;">08:00</div>
<div style="left:275px;top:332px;width:1450px;height:1px;background:#e0e0e0"></div>
<div style="left:326px;top:353px;width:1399px;height:1px;background:#f2f2f2"></div>
<div class="t" style="left:294.10px;top:335.00px;font-size:12px;letter-spacing:-0.266px;">09:00</div>
<div style="left:275px;top:374px;width:1450px;height:1px;background:#e0e0e0"></div>
<div style="left:326px;top:395px;width:1399px;height:1px;background:#f2f2f2"></div>
<div class="t" style="left:294.10px;top:377.00px;font-size:12px;letter-spacing:-0.266px;">10:00</div>
<div style="left:275px;top:416px;width:1450px;height:1px;background:#e0e0e0"></div>
<div style="left:326px;top:437px;width:1399px;height:1px;background:#f2f2f2"></div>
<div class="t" style="left:294.10px;top:419.00px;font-size:12px;letter-spacing:-0.088px;">11:00</div>
<div style="left:275px;top:458px;width:1450px;height:1px;background:#e0e0e0"></div>
<div style="left:326px;top:479px;width:1399px;height:1px;background:#f2f2f2"></div>
<div class="t" style="left:294.10px;top:461.00px;font-size:12px;letter-spacing:-0.266px;">12:00</div>
<div style="left:275px;top:500px;width:1450px;height:1px;background:#e0e0e0"></div>
<div style="left:326px;top:521px;width:1399px;height:1px;background:#f2f2f2"></div>
<div class="t" style="left:294.10px;top:503.00px;font-size:12px;letter-spacing:-0.266px;">13:00</div>
<div style="left:275px;top:542px;width:1450px;height:1px;background:#e0e0e0"></div>
<div style="left:326px;top:563px;width:1399px;height:1px;background:#f2f2f2"></div>
<div class="t" style="left:294.10px;top:545.00px;font-size:12px;letter-spacing:-0.266px;">14:00</div>
<div style="left:275px;top:584px;width:1450px;height:1px;background:#e0e0e0"></div>
<div style="left:326px;top:605px;width:1399px;height:1px;background:#f2f2f2"></div>
<div class="t" style="left:294.10px;top:587.00px;font-size:12px;letter-spacing:-0.266px;">15:00</div>
<div style="left:275px;top:626px;width:1450px;height:1px;background:#e0e0e0"></div>
<div style="left:326px;top:647px;width:1399px;height:1px;background:#f2f2f2"></div>
<div class="t" style="left:294.10px;top:629.00px;font-size:12px;letter-spacing:-0.266px;">16:00</div>
<div style="left:275px;top:668px;width:1450px;height:1px;background:#e0e0e0"></div>
<div style="left:326px;top:689px;width:1399px;height:1px;background:#f2f2f2"></div>
<div class="t" style="left:294.10px;top:671.00px;font-size:12px;letter-spacing:-0.266px;">17:00</div>
<div style="left:275px;top:710px;width:1450px;height:1px;background:#e0e0e0"></div>
<div style="left:326px;top:731px;width:1399px;height:1px;background:#f2f2f2"></div>
<div class="t" style="left:294.10px;top:713.00px;font-size:12px;letter-spacing:-0.266px;">18:00</div>
<div style="left:275px;top:752px;width:1450px;height:1px;background:#e0e0e0"></div>
<div style="left:326px;top:773px;width:1399px;height:1px;background:#f2f2f2"></div>
<div class="t" style="left:294.10px;top:755.00px;font-size:12px;letter-spacing:-0.266px;">19:00</div>
<div style="left:275px;top:794px;width:1450px;height:1px;background:#e0e0e0"></div>
<div style="left:326px;top:815px;width:1399px;height:1px;background:#f2f2f2"></div>
<div class="t" style="left:294.10px;top:797.00px;font-size:12px;letter-spacing:-0.266px;">20:00</div>
<div style="left:275px;top:836px;width:1450px;height:1px;background:#e0e0e0"></div>
<div style="left:326px;top:857px;width:1399px;height:1px;background:#f2f2f2"></div>
<div class="t" style="left:294.10px;top:839.00px;font-size:12px;letter-spacing:-0.266px;">21:00</div>
<div style="left:275px;top:878px;width:1450px;height:1px;background:#e0e0e0"></div>
<div style="left:326px;top:899px;width:1399px;height:1px;background:#f2f2f2"></div>
<div class="t" style="left:294.10px;top:881.00px;font-size:12px;letter-spacing:-0.266px;">22:00</div>
<div style="left:275px;top:920px;width:1450px;height:1px;background:#e0e0e0"></div>
<div style="left:326px;top:941px;width:1399px;height:1px;background:#f2f2f2"></div>
<div class="t" style="left:294.10px;top:923.00px;font-size:12px;letter-spacing:-0.266px;">23:00</div>
<div style="left:325px;top:180px;width:1px;height:21px;background:#dcdcdc"></div>
<div style="left:525px;top:180px;width:1px;height:21px;background:#dcdcdc"></div>
<div style="left:725px;top:180px;width:1px;height:21px;background:#dcdcdc"></div>
<div style="left:925px;top:180px;width:1px;height:21px;background:#dcdcdc"></div>
<div style="left:1125px;top:180px;width:1px;height:21px;background:#dcdcdc"></div>
<div style="left:1325px;top:180px;width:1px;height:21px;background:#dcdcdc"></div>
<div style="left:1525px;top:180px;width:1px;height:21px;background:#dcdcdc"></div>
<div style="left:325px;top:201px;width:1px;height:823px;background:#dcdcdc"></div>
<div style="left:525px;top:201px;width:1px;height:823px;background:#dcdcdc"></div>
<div style="left:725px;top:201px;width:1px;height:823px;background:#dcdcdc"></div>
<div style="left:925px;top:201px;width:1px;height:823px;background:#dcdcdc"></div>
<div style="left:1125px;top:201px;width:1px;height:823px;background:#dcdcdc"></div>
<div style="left:1325px;top:201px;width:1px;height:823px;background:#dcdcdc"></div>
<div style="left:1525px;top:201px;width:1px;height:823px;background:#dcdcdc"></div>
<div style="left:1725px;top:201px;width:1px;height:823px;background:#dcdcdc"></div>
<div style="left:275px;top:180px;width:1px;height:845px;background:#e0e0e0"></div>
<div style="left:275px;top:216px;width:1450px;height:5px;background:#d2d2d2"></div>
<div style="left:1725px;top:217px;width:195px;height:4px;background:#d3d3d3"></div>
<div style="left:275px;top:961px;width:1450px;height:6px;background:#d2d2d2"></div>
<div style="left:1725px;top:962px;width:195px;height:4px;background:#d3d3d3"></div>
<div style="left:275px;top:1024px;width:1451px;height:1px;background:#d6d6d6"></div>
<div style="left:275px;top:1025px;width:1644px;height:17px;background:#f0f0f0"></div>
<div style="left:1902px;top:178px;width:17px;height:39px;background:#f0f0f0"></div>
<div style="left:1902px;top:221px;width:17px;height:741px;background:#f0f0f0"></div>
<div style="left:1902px;top:425px;width:17px;height:520px;background:#cdcdcd"></div>
<div style="left:1902px;top:967px;width:17px;height:58px;background:#f0f0f0"></div>
<div class="t c" style="left:271.300px;top:988.500px;width:60px;transform:rotate(-90deg);font-size:12px;letter-spacing:-0.050px">Aufgaben</div>
<div style="left:525px;top:374px;width:195px;height:54px;background:#fff;border:1px solid #111"></div>
<div style="left:720px;top:374px;width:6px;height:54px;background:#4f81bd;border-right:1px solid #416c9f"></div>
<div class="t" style="left:530.50px;top:379.00px;font-size:12px;letter-spacing:-0.184px;font-weight:bold;color:#557ca6;">Oster, Sarah, Neue</div>
<div class="t" style="left:530.50px;top:395.00px;font-size:12px;letter-spacing:-0.087px;font-weight:bold;color:#557ca6;">Wohnungseinrichtung. Hausrat</div>
<div class="t" style="left:530.50px;top:411.00px;font-size:12px;letter-spacing:-0.206px;font-weight:bold;color:#557ca6;">anpassen!!, 12.01.2016, Besuch</div>
<div style="left:925px;top:626px;width:195px;height:54px;background:#fff;border:1px solid #111"></div>
<div style="left:1120px;top:626px;width:6px;height:54px;background:#4f81bd;border-right:1px solid #416c9f"></div>
<div class="t" style="left:930.50px;top:631.00px;font-size:12px;letter-spacing:-0.253px;font-weight:bold;color:#557ca6;">Heinzen, Sven, Interesse KV</div>
<div class="t" style="left:930.50px;top:647.00px;font-size:12px;letter-spacing:-0.217px;font-weight:bold;color:#557ca6;">Zusatzversicherung ganze</div>
<div class="t" style="left:930.50px;top:663.00px;font-size:12px;letter-spacing:-0.155px;font-weight:bold;color:#557ca6;">Familie, 14.01.2016, Besuch</div>
<svg style="left:0;top:0" width="1920" height="1078" viewBox="0 0 1920 1078"><path d="M1906.7 233.2L1910.7 229.2L1914.7 233.2" fill="none" stroke="#989898" stroke-width="1.4"/><path d="M1906.7 952.2L1910.7 956.2L1914.7 952.2" fill="none" stroke="#989898" stroke-width="1.4"/><path d="M1906.7 977.5L1910.7 973.5L1914.7 977.5" fill="none" stroke="#d9d9d9" stroke-width="1.4"/><path d="M1906.7 1014.5L1910.7 1018.5L1914.7 1014.5" fill="none" stroke="#d9d9d9" stroke-width="1.4"/><path d="M285.15000000000003 1029.7L281.45 1033.4L285.15000000000003 1037.1000000000001" fill="none" stroke="#d6d6d6" stroke-width="1.2"/><path d="M314.95 1029.7L318.65000000000003 1033.4L314.95 1037.1000000000001" fill="none" stroke="#d6d6d6" stroke-width="1.2"/><path d="M335.15000000000003 1029.7L331.45 1033.4L335.15000000000003 1037.1000000000001" fill="none" stroke="#d6d6d6" stroke-width="1.2"/><path d="M1891.65 1029.7L1895.35 1033.4L1891.65 1037.1000000000001" fill="none" stroke="#d6d6d6" stroke-width="1.2"/></svg>
<div style="left:1576px;top:1048px;width:150px;height:23px;background:#f9f9f9;border:1px solid #737373;"></div>
<div style="left:1732px;top:1048px;width:90px;height:23px;background:#f9f9f9;border:1px solid #737373;"></div>
<div style="left:1829px;top:1048px;width:90px;height:23px;background:#f9f9f9;border:1px solid #737373;"></div>
<div class="t" style="left:1601.40px;top:1052.70px;font-size:12px;letter-spacing:-0.157px;">Erinnerungen anzeigen</div>
<div class="t" style="left:1761.40px;top:1052.70px;font-size:12px;letter-spacing:-0.130px;font-weight:bold;color:#9e9e9e;">Anzeigen</div>
<div class="t" style="left:1862.90px;top:1052.70px;font-size:12px;letter-spacing:-0.109px;font-weight:bold;color:#9e9e9e;">Erledigt</div>
<svg style="left:1578px;top:1049px" width="20" height="21" viewBox="0 0 20 21"><ellipse cx="3.600" cy="4.300" rx="3.100" ry="2.100" transform="rotate(-42 3.600 4.300)" fill="#8a8a8a"/><ellipse cx="16" cy="4.300" rx="3.100" ry="2.100" transform="rotate(42 16 4.300)" fill="#8a8a8a"/><rect x="8.800" y="0.900" width="2" height="2" fill="#8a8a8a"/><path d="M5.300 16.200l-1.700 3M14.300 16.200l1.700 3" stroke="#8a8a8a" stroke-width="1.900" fill="none"/><circle cx="9.800" cy="10.400" r="6.700" stroke="#8a8a8a" stroke-width="1.800" fill="#f3f7fc"/><path d="M6.400 8.800l3.400 3.500 3.400-2.500" stroke="#4f81bd" stroke-width="1.300" fill="none"/></svg>
<svg style="left:1736px;top:1049px" width="16" height="20" viewBox="0 0 16 20"><ellipse cx="7.600" cy="5.900" rx="5.200" ry="5" fill="#3e7ac2"/><path d="M1.100 19.700C0.600 15 2.500 11.300 7.600 11.300S14.700 15 14.200 19.700z" fill="#3e7ac2"/></svg>
<svg style="left:1831px;top:1050px" width="19" height="19" viewBox="0 0 19 19"><circle cx="9.400" cy="9.600" r="9.200" fill="#6aa88e"/><path d="M4.800 9.800l3.300 3.300 6-6.600" fill="none" stroke="#fff" stroke-width="2.300"/></svg>
<div style="left:0px;top:1077px;width:1920px;height:1px;background:#dadada;"></div>
<div style="left:0px;top:56px;width:1px;height:1022px;background:#dedede;"></div>
<div style="left:1919px;top:56px;width:1px;height:1022px;background:#dedede;"></div>
</body></html>
